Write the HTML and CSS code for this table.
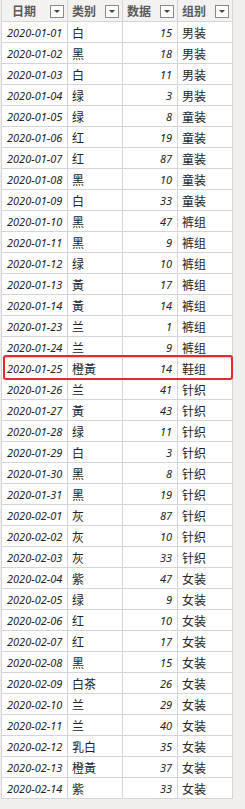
FILE: index.html
```html
<!DOCTYPE html>
<html>
<head>
<meta charset="utf-8">
<link rel="stylesheet" href="styles.css">
</head>
<body>
<div class="wrap">
  <div class="grid">
    <div class="hd"><span class="ht">日期</span><span class="dd"></span></div>
    <div class="hd"><span class="ht">类别</span><span class="dd"></span></div>
    <div class="hd"><span class="ht">数据</span><span class="dd"></span></div>
    <div class="hd"><span class="ht">组别</span><span class="dd"></span></div>
  </div>
  <div class="mark"></div>
</div>
<script src="app.js"></script>
</body>
</html>
```
FILE: app.js
```js
const rows = [
["2020-01-01","白",15,"男装"],
["2020-01-02","黑",18,"男装"],
["2020-01-03","白",11,"男装"],
["2020-01-04","绿",3,"男装"],
["2020-01-05","绿",8,"童装"],
["2020-01-06","红",19,"童装"],
["2020-01-07","红",87,"童装"],
["2020-01-08","黑",10,"童装"],
["2020-01-09","白",33,"童装"],
["2020-01-10","黑",47,"裤组"],
["2020-01-11","黑",9,"裤组"],
["2020-01-12","绿",10,"裤组"],
["2020-01-13","黃",17,"裤组"],
["2020-01-14","黃",14,"裤组"],
["2020-01-23","兰",1,"裤组"],
["2020-01-24","兰",9,"裤组"],
["2020-01-25","橙黃",14,"鞋组"],
["2020-01-26","兰",41,"针织"],
["2020-01-27","黃",43,"针织"],
["2020-01-28","绿",11,"针织"],
["2020-01-29","白",3,"针织"],
["2020-01-30","黑",8,"针织"],
["2020-01-31","黑",19,"针织"],
["2020-02-01","灰",87,"针织"],
["2020-02-02","灰",10,"针织"],
["2020-02-03","灰",33,"针织"],
["2020-02-04","紫",47,"女装"],
["2020-02-05","绿",9,"女装"],
["2020-02-06","红",10,"女装"],
["2020-02-07","红",17,"女装"],
["2020-02-08","黑",15,"女装"],
["2020-02-09","白茶",26,"女装"],
["2020-02-10","兰",29,"女装"],
["2020-02-11","兰",40,"女装"],
["2020-02-12","乳白",35,"女装"],
["2020-02-13","橙黃",37,"女装"],
["2020-02-14","紫",33,"女装"]
];
const g = document.querySelector('.grid');
for (const r of rows) {
  const cls = ['c date','c txt','c num','c txt'];
  r.forEach((v, i) => {
    const d = document.createElement('div');
    d.className = cls[i];
    d.textContent = v;
    g.appendChild(d);
  });
}
```
FILE: styles.css
```css
html, body { margin: 0; padding: 0; }
body {
  background: #f0efee;
  width: 245px;
  height: 809px;
  overflow: hidden;
}
.wrap {
  position: relative;
  padding-left: 1px;
}
.grid {
  display: grid;
  grid-template-columns: 65px 54px 54px 54px;
  grid-template-rows: 21px;
  grid-auto-rows: 20px;
  gap: 1px;
  background: #d5d5d5;
  width: 232px;
  box-sizing: border-box;
  padding: 0 1px 1px 1px;
}
.hd {
  background: #f3f2f1;
  display: flex;
  align-items: center;
  justify-content: space-between;
  padding: 0 3px 0 10px;
}
.ht {
  font-family: "Noto Sans CJK SC", sans-serif;
  font-size: 12px;
  font-weight: 700;
  color: #5a5a5a;
}
.hd:nth-child(n+2) { padding-left: 4px; }
.dd {
  width: 12px;
  height: 11px;
  border: 1px solid #8a8a8a;
  background: #fff;
  position: relative;
  margin-top: 2px;
}
.dd::after {
  content: "";
  position: absolute;
  left: 3px;
  top: 4px;
  border-left: 3px solid transparent;
  border-right: 3px solid transparent;
  border-top: 3px solid #444;
}
.c {
  background: #fff;
  display: flex;
  align-items: center;
  color: #252423;
  white-space: nowrap;
}
.date {
  font-family: "Noto Sans", sans-serif;
  font-style: italic;
  font-size: 11px;
  padding-left: 5px;
}
.num {
  font-family: "Noto Sans", sans-serif;
  font-style: italic;
  font-size: 11px;
  justify-content: flex-end;
  padding-right: 5px;
}
.txt {
  font-family: "Noto Sans CJK SC", sans-serif;
  font-size: 12px;
  padding-left: 4px;
}
.mark {
  position: absolute;
  left: 3px;
  top: 355px;
  width: 226px;
  height: 21px;
  border: 2px solid #e8282b;
  border-radius: 3px;
}
```
